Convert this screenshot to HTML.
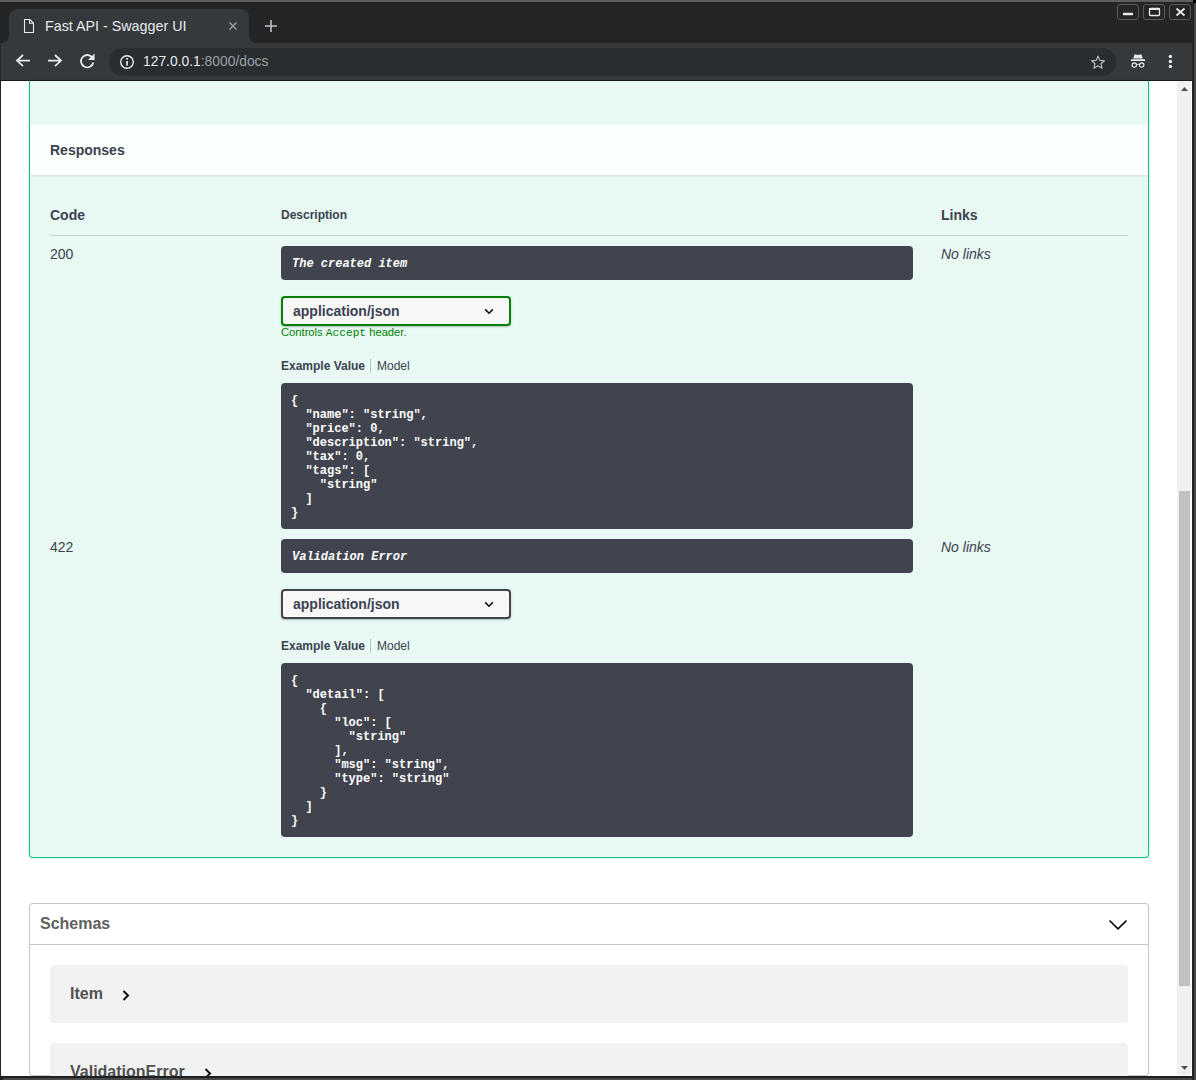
<!DOCTYPE html>
<html><head><meta charset="utf-8">
<style>
*{box-sizing:border-box;margin:0;padding:0}
html,body{width:1196px;height:1080px;overflow:hidden;background:#202124;font-family:"Liberation Sans",sans-serif}
.a{position:absolute}
#frame{position:absolute;left:0;top:0;width:1196px;height:1080px;background:#232527}
#topline{left:0;top:0;width:1193px;height:2px;background:#5e5e5e}
#tab{left:9px;top:9px;width:240px;height:34px;background:#35393b;border-radius:8px 8px 0 0}
#toolbar{left:1px;top:43px;width:1191px;height:37px;background:#35393b}
#omni{left:109px;top:48px;width:1007px;height:28px;border-radius:14px;background:#2a2d30}
#sep{left:0;top:80px;width:1196px;height:1px;background:#1a1a1a}
#page{left:1px;top:81px;width:1191px;height:994px;background:#fff;overflow:hidden}
.wbtn{top:4px;width:22px;height:16px;border:1px solid #5a5a5a;border-radius:3px}
.t{position:absolute;white-space:pre;line-height:1}
.code{font-family:"Liberation Mono",monospace;font-weight:bold;font-size:12px;color:#fff;line-height:14px;white-space:pre}
.sb{font-weight:bold;color:#3b4151}
.sr{color:#3b4151}
.desc{left:281px;width:632px;height:34px;background:#41444e;border-radius:4px}
.desc .t{font-family:"Liberation Mono",monospace;font-weight:bold;font-style:italic;font-size:12px;color:#fff}
.sel{left:281px;width:230px;height:30px;border:2px solid #41444e;border-radius:4px;background:#f7f7f7;box-shadow:0 1px 2px 0 rgba(0,0,0,.25)}
.sel .t{font-size:14px;font-weight:bold;color:#3b4151}
.cb{left:281px;width:632px;background:#41444e;border-radius:4px;padding:11px 10px 0}
.mc{left:50px;width:1078px;background:#f2f2f2;border-radius:4px;overflow:hidden}
.mc .t{font-size:16px;font-weight:bold;color:#505050}
#page{left:1px;top:81px;width:1191px;height:995px;background:#fff}
</style></head><body>
<div id="frame"></div>
<div class="a" id="topline"></div>
<!-- tab -->
<div class="a" id="tab"></div>
<svg class="a" style="left:0;top:0" width="300" height="45">
  <path d="M1 43 Q9 43 9 35 L9 43 Z" fill="#35393b"/>
  <path d="M249 35 Q249 43 257 43 L249 43 Z" fill="#35393b"/>
  <!-- file icon -->
  <path d="M24.5 19.5 H29.8 L33.5 23.2 V32.5 H24.5 Z" fill="none" stroke="#e8eaed" stroke-width="1.1" stroke-linejoin="round"/>
  <path d="M29.5 19.5 V23.2 H33.5" fill="none" stroke="#e8eaed" stroke-width="1.1"/>
  <!-- close x -->
  <path d="M229.5 22.5 L236.5 29.5 M236.5 22.5 L229.5 29.5" stroke="#9aa0a6" stroke-width="1.4"/>
  <!-- plus -->
  <path d="M271 20 V32 M265 26 H277" stroke="#bdc1c6" stroke-width="1.6"/>
</svg>
<div class="t" style="left:45px;top:19px;font-size:14.3px;color:#e8eaed">Fast API - Swagger UI</div>
<!-- window buttons -->
<div class="a wbtn" style="left:1117px"></div>
<div class="a wbtn" style="left:1143px"></div>
<div class="a wbtn" style="left:1169px"></div>
<svg class="a" style="left:1110px;top:0" width="86" height="30">
  <rect x="13" y="12.8" width="10" height="2.5" rx="0.5" fill="#e8eaed"/>
  <rect x="39.5" y="8.5" width="10" height="7" rx="1" fill="none" stroke="#e8eaed" stroke-width="1.3"/>
  <rect x="39" y="8" width="11" height="2" fill="#e8eaed"/>
  <path d="M66.5 8.5 L74.5 15.5 M74.5 8.5 L66.5 15.5" stroke="#e8eaed" stroke-width="1.7"/>
</svg>
<!-- toolbar -->
<div class="a" id="toolbar"></div>
<div class="a" id="omni"></div>
<svg class="a" style="left:0;top:42px" width="300" height="38">
  <!-- back -->
  <path d="M30 18.6 H17.5 M23 13 L17 18.6 L23 24.2" fill="none" stroke="#e8eaed" stroke-width="1.8"/>
  <!-- fwd -->
  <path d="M48 18.6 H60.5 M55 13 L61 18.6 L55 24.2" fill="none" stroke="#e8eaed" stroke-width="1.8"/>
  <!-- reload -->
  <path d="M92.2 15.5 A6.2 6.2 0 1 0 93.3 20.5" fill="none" stroke="#e8eaed" stroke-width="1.8"/>
  <path d="M94.5 11.5 V18 H88 Z" fill="#e8eaed"/>
  <!-- info -->
  <circle cx="127" cy="20" r="6.3" fill="none" stroke="#e8eaed" stroke-width="1.4"/>
  <rect x="126.2" y="19" width="1.7" height="4.6" fill="#e8eaed"/>
  <rect x="126.2" y="16" width="1.7" height="1.7" fill="#e8eaed"/>
</svg>
<div class="t" style="left:143px;top:55px;font-size:13.85px;color:#e8eaed">127.0.0.1<span style="color:#9aa0a6">:8000/docs</span></div>
<svg class="a" style="left:1080px;top:42px" width="116" height="38">
  <!-- star -->
  <path transform="translate(18 20.3) scale(0.88) translate(-18 -20.5)" d="M18 13.5 L20.1 18.3 L25.3 18.7 L21.4 22.1 L22.6 27.2 L18 24.5 L13.4 27.2 L14.6 22.1 L10.7 18.7 L15.9 18.3 Z" fill="none" stroke="#bdc1c6" stroke-width="1.3" stroke-linejoin="round"/>
  <!-- incognito -->
  <path d="M54.6 12.2 Q58 13.4 61.4 12.2 L62.8 16.6 H53.2 Z" fill="#e8eaed"/>
  <rect x="50.8" y="17.3" width="14.3" height="1.8" rx="0.9" fill="#e8eaed"/>
  <circle cx="54.3" cy="23.1" r="2.2" fill="none" stroke="#e8eaed" stroke-width="1.1"/>
  <circle cx="61.7" cy="23.1" r="2.2" fill="none" stroke="#e8eaed" stroke-width="1.1"/>
  <path d="M56.5 22.6 Q58 22 59.5 22.6" fill="none" stroke="#e8eaed" stroke-width="0.9"/>
  <!-- dots -->
  <circle cx="90.4" cy="14.5" r="1.7" fill="#e8eaed"/>
  <circle cx="90.4" cy="19.5" r="1.7" fill="#e8eaed"/>
  <circle cx="90.4" cy="24.4" r="1.7" fill="#e8eaed"/>
</svg>
<div class="a" id="sep"></div>

<!-- page -->
<div class="a" id="page"></div>
<!-- opblock -->
<div class="a" style="left:29px;top:81px;width:1120px;height:777px;border:1px solid #06c88c;border-top:none;border-radius:0 0 4px 4px;background:#e8f9f3;box-shadow:0 0 3px rgba(0,0,0,.19)"></div>
<div class="a" style="left:30px;top:125px;width:1118px;height:50px;background:#fbfffd;box-shadow:0 1px 2px rgba(0,0,0,.1)"></div>
<div class="t sb" style="left:50px;top:143px;font-size:14px">Responses</div>
<div class="t sb" style="left:50px;top:208px;font-size:14px">Code</div>
<div class="t sb" style="left:281px;top:209px;font-size:12px">Description</div>
<div class="t sb" style="left:941px;top:208px;font-size:14px">Links</div>
<div class="a" style="left:50px;top:235px;width:1078px;height:1px;background:rgba(59,65,81,.2)"></div>
<div class="t sr" style="left:50px;top:247px;font-size:14px">200</div>
<div class="t sr" style="left:941px;top:247px;font-size:14px;font-style:italic">No links</div>
<div class="a desc" style="top:246px"><span class="t" style="left:11px;top:12px">The created item</span></div>
<div class="a sel" style="top:296px;border-color:#008000"><span class="t" style="left:10px;top:6px">application/json</span><svg class="a" style="left:200px;top:8px" width="16" height="12"><path d="M2.2 3.4 L6 7.2 L9.8 3.4" fill="none" stroke="#111" stroke-width="1.6"/></svg></div>
<div class="t" style="left:281px;top:327px;font-size:11.2px;color:#008000">Controls <span style="font-family:'Liberation Mono',monospace">Accept</span> header.</div>
<div class="t sb" style="left:281px;top:360px;font-size:12px">Example Value</div>
<div class="a" style="left:370px;top:359px;width:1px;height:14px;background:rgba(0,0,0,.2)"></div>
<div class="t sr" style="left:377px;top:360px;font-size:12px">Model</div>
<div class="a cb" style="top:383px;height:146px"><pre class="code">{
  "name": "string",
  "price": 0,
  "description": "string",
  "tax": 0,
  "tags": [
    "string"
  ]
}</pre></div>

<div class="t sr" style="left:50px;top:540px;font-size:14px">422</div>
<div class="t sr" style="left:941px;top:540px;font-size:14px;font-style:italic">No links</div>
<div class="a desc" style="top:539px"><span class="t" style="left:11px;top:12px">Validation Error</span></div>
<div class="a sel" style="top:589px"><span class="t" style="left:10px;top:6px">application/json</span><svg class="a" style="left:200px;top:8px" width="16" height="12"><path d="M2.2 3.4 L6 7.2 L9.8 3.4" fill="none" stroke="#111" stroke-width="1.6"/></svg></div>
<div class="t sb" style="left:281px;top:640px;font-size:12px">Example Value</div>
<div class="a" style="left:370px;top:639px;width:1px;height:14px;background:rgba(0,0,0,.2)"></div>
<div class="t sr" style="left:377px;top:640px;font-size:12px">Model</div>
<div class="a cb" style="top:663px;height:174px"><pre class="code">{
  "detail": [
    {
      "loc": [
        "string"
      ],
      "msg": "string",
      "type": "string"
    }
  ]
}</pre></div>

<!-- schemas -->
<div class="a" style="left:29px;top:903px;width:1120px;height:173px;border-bottom:none;border-radius:4px 4px 0 0;border:1px solid rgba(59,65,81,.3);border-radius:4px;background:#fff"></div>
<div class="a" style="left:30px;top:944px;width:1118px;height:1px;background:rgba(59,65,81,.3)"></div>
<div class="t" style="left:40px;top:916px;font-size:16px;font-weight:bold;color:#606060">Schemas</div>
<svg class="a" style="left:1100px;top:910px" width="36" height="26"><path d="M9.5 10.5 L18 18.8 L26.5 10.5" fill="none" stroke="#000" stroke-width="1.6"/></svg>
<div class="a mc" style="top:965px;height:58px"><span class="t" style="left:20px;top:21px">Item</span><svg class="a" style="left:70px;top:24px" width="12" height="14"><path d="M3.5 2 L8 6.5 L3.5 11" fill="none" stroke="#111" stroke-width="2"/></svg></div>
<div class="a mc" style="top:1043px;height:33px;border-radius:4px 4px 0 0"><span class="t" style="left:20px;top:21px">ValidationError</span><svg class="a" style="left:152px;top:24px" width="12" height="14"><path d="M3.5 2 L8 6.5 L3.5 11" fill="none" stroke="#111" stroke-width="2"/></svg></div>

<!-- scrollbar -->
<div class="a" style="left:1177px;top:81px;width:14px;height:994px;background:#f1f1f1"></div>
<div class="a" style="left:1179px;top:491px;width:11px;height:495px;background:#c1c1c1"></div>
<svg class="a" style="left:1177px;top:81px" width="15" height="15"><path d="M4 10 L7.5 6 L11 10 Z" fill="#505050"/></svg>
<svg class="a" style="left:1177px;top:1060px" width="15" height="15"><path d="M4 6 L7.5 10 L11 6 Z" fill="#505050"/></svg>
<div class="a" style="left:0;top:1076px;width:1196px;height:4px;background:#1f2022"></div><div class="a" style="left:3px;top:1078px;width:1193px;height:2px;background:#484848"></div>
<div class="a" style="left:1192px;top:2px;width:2px;height:1078px;background:#232527"></div><div class="a" style="left:1194px;top:3px;width:2px;height:1077px;background:#474747"></div><div class="a" style="left:1193px;top:0;width:3px;height:3px;background:#000"></div>

</body></html>
